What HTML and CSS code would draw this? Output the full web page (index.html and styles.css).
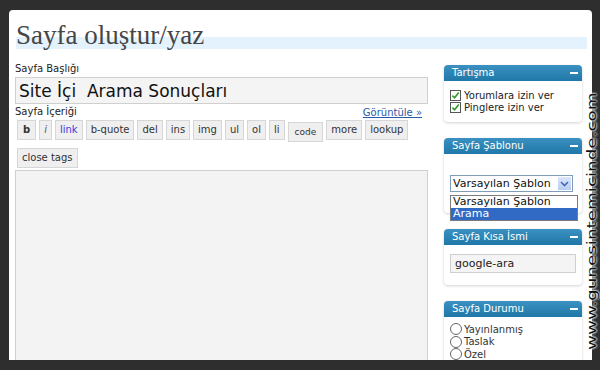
FILE: index.html
```html
<!DOCTYPE html>
<html>
<head>
    <title>Sayfa oluştur/yaz</title>
    <link rel="stylesheet" href="styles.css">
</head>
<body>
    <div class="wrap">
        <h2 class="page-title">Sayfa oluştur/yaz</h2>

        <div class="columns">
            <div class="main">
                <label class="field-label">Sayfa Başlığı</label>
                <div class="title-input">Site İçi&nbsp; Arama Sonuçları</div>

                <div class="content-head">
                    <label class="field-label">Sayfa İçeriği</label>
                    <a href="#" class="preview">Görüntüle »</a>
                </div>

                <div class="toolbar">
                    <button class="ed b">b</button>
                    <button class="ed i">i</button>
                    <button class="ed link">link</button>
                    <button class="ed">b-quote</button>
                    <button class="ed">del</button>
                    <button class="ed">ins</button>
                    <button class="ed">img</button>
                    <button class="ed">ul</button>
                    <button class="ed">ol</button>
                    <button class="ed">li</button>
                    <button class="ed code">code</button>
                    <button class="ed">more</button>
                    <button class="ed">lookup</button>
                    <button class="ed">close tags</button>
                </div>

                <div class="editor"></div>
            </div>

            <div class="sidebar">
                <div class="box">
                    <div class="box-head">Tartışma <i class="toggle"></i></div>
                    <div class="box-body">
                        <div class="check"><span class="cb"><svg width="9" height="9" viewBox="0 0 10 10"><path d="M1.5 5.2 4 7.6 8.6 1.8" fill="none" stroke="#2e9a2a" stroke-width="1.8"/></svg></span>Yorumlara izin ver</div>
                        <div class="check"><span class="cb"><svg width="9" height="9" viewBox="0 0 10 10"><path d="M1.5 5.2 4 7.6 8.6 1.8" fill="none" stroke="#2e9a2a" stroke-width="1.8"/></svg></span>Pinglere izin ver</div>
                    </div>
                </div>

                <div class="box template">
                    <div class="box-head">Sayfa Şablonu <i class="toggle"></i></div>
                    <div class="box-body">
                        <div class="select">
                            <span>Varsayılan Şablon</span>
                            <span class="arrow"><svg width="9" height="6" viewBox="0 0 9 6"><path d="M1 1 4.5 4.5 8 1" fill="none" stroke="#4a66b8" stroke-width="1.6"/></svg></span>
                        </div>
                        <ul class="options">
                            <li>Varsayılan Şablon</li>
                            <li class="on">Arama</li>
                        </ul>
                    </div>
                </div>

                <div class="box">
                    <div class="box-head">Sayfa Kısa İsmi <i class="toggle"></i></div>
                    <div class="box-body slug-body">
                        <div class="slug">google-ara</div>
                    </div>
                </div>

                <div class="box">
                    <div class="box-head">Sayfa Durumu <i class="toggle"></i></div>
                    <div class="box-body radios">
                        <div class="radio"><span class="rb"></span>Yayınlanmış</div>
                        <div class="radio"><span class="rb"></span>Taslak</div>
                        <div class="radio"><span class="rb"></span>Özel</div>
                    </div>
                </div>
            </div>
        </div>
    </div>
    <div class="watermark">www.gunesintemicinde.com</div>
</body>
</html>
```

FILE: styles.css
```css
body {
    margin: 0;
    padding: 10px 8px 0 9px;
    background-color: #2e2e2e;
    font-family: "DejaVu Sans", Verdana, sans-serif;
    font-size: 10px;
    color: #333;
    height: 370px;
    box-sizing: border-box;
    overflow: hidden;
}
.wrap {
    background-color: #fff;
    height: 350px;
    border-radius: 4px 4px 0 0;
    padding: 0 0 0 6px;
    overflow: hidden;
}
.page-title {
    margin: 0 5px 0 1px;
    padding-top: 5px;
    height: 35px;
    font-family: Georgia, "Liberation Serif", serif;
    font-weight: normal;
    font-size: 27px;
    line-height: 40px;
    color: #464646;
    background: linear-gradient(to bottom, transparent 27px, #e4f2fd 27px, #e4f2fd 39px, transparent 39px);
}
.columns {
    display: grid;
    grid-template-columns: 413px 138px;
    gap: 16px;
}
.main {
    display: flex;
    flex-direction: column;
}
.field-label {
    font-size: 10px;
    color: #222;
    line-height: 12px;
}
.main > .field-label {
    margin-top: 13px;
    margin-bottom: 2px;
}
.title-input {
    height: 25px;
    border: 1px solid #cfcfcf;
    background-color: #f4f4f4;
    font-size: 17px;
    line-height: 27px;
    color: #111;
    padding-left: 3px;
}
.content-head {
    display: flex;
    justify-content: space-between;
    align-items: flex-end;
    margin-top: 2px;
}
.preview {
    color: #2a5ba8;
    font-size: 10px;
    margin-right: 6px;
}
.toolbar {
    display: flex;
    flex-wrap: wrap;
    gap: 6px 3px;
    padding: 2px 0 0 2px;
}
.ed {
    font-family: "DejaVu Sans", Verdana, sans-serif;
    font-size: 10px;
    height: 20px;
    padding: 0 4px;
    border: 1px solid #d6d6d6;
    background-color: #efefef;
    color: #333;
    line-height: 18px;
}
.ed.b { font-weight: bold; padding: 0 5px; }
.ed.i { font-style: italic; color: #555; }
.ed.link { color: #3a3adb; }
.ed.code { margin-top: 2px; font-size: 9px; padding: 0 6px; }
.editor {
    margin-top: 2px;
    height: 200px;
    border: 1px solid #cfcfcf;
    background-color: #f3f3f3;
}
.sidebar {
    padding-top: 15px;
    display: flex;
    flex-direction: column;
    gap: 16px;
}
.box {
    background-color: #fff;
    border-radius: 4px;
    box-shadow: 0 1px 3px rgba(0, 0, 0, 0.18);
    position: relative;
}
.box-head {
    height: 16px;
    line-height: 16px;
    background: linear-gradient(to bottom, #3b91c1, #1f78a8);
    color: #fff;
    font-size: 10px;
    padding-left: 8px;
    border-radius: 4px 4px 0 0;
    position: relative;
}
.toggle {
    position: absolute;
    right: 4px;
    top: 7px;
    width: 8px;
    height: 2px;
    background-color: #fff;
}
.box-body {
    padding: 8px 6px 9px;
}
.check {
    display: flex;
    align-items: center;
    gap: 3px;
    height: 12px;
    font-size: 10px;
    color: #222;
}
.cb {
    width: 9px;
    height: 9px;
    border: 1px solid #555;
    background-color: #fff;
    display: flex;
}
.template .box-body {
    padding: 21px 5px 21px 6px;
}
.select {
    height: 15px;
    border: 1px solid #7f9db9;
    display: flex;
    justify-content: space-between;
    font-size: 11px;
    line-height: 15px;
    color: #111;
    padding-left: 2px;
    margin-right: 4px;
}
.arrow {
    width: 13px;
    height: 13px;
    margin: 1px;
    background: linear-gradient(to bottom, #dbe6fb, #b8cdf5);
    display: flex;
    align-items: center;
    justify-content: center;
}
.options {
    position: absolute;
    left: 6px;
    right: 4px;
    top: 57px;
    margin: 0;
    padding: 0;
    list-style: none;
    background-color: #fff;
    border: 1px solid #7a7a7a;
    font-size: 11px;
    line-height: 12px;
    z-index: 2;
}
.options li {
    padding-left: 2px;
    color: #111;
}
.options li.on {
    background-color: #316ac5;
    color: #fff;
}
.slug-body {
    padding: 9px 6px 12px;
}
.slug {
    height: 17px;
    border: 1px solid #cfcfcf;
    background-color: #f4f4f4;
    font-size: 11px;
    line-height: 17px;
    padding-left: 4px;
    color: #222;
}
.radios {
    padding-top: 6px;
}
.radio {
    display: flex;
    align-items: center;
    gap: 2px;
    height: 12.5px;
    font-size: 10px;
}
.rb {
    width: 10px;
    height: 10px;
    border: 1px solid #666;
    border-radius: 50%;
    background-color: #fff;
}
.watermark {
    position: absolute;
    left: 585px;
    top: 350px;
    transform-origin: 0 0;
    transform: rotate(-90deg) scaleX(1.41);
    font-family: "DejaVu Sans", Verdana, sans-serif;
    font-size: 13px;
    line-height: 13px;
    color: #111;
    text-shadow: 0 0 2px #fff, 0 0 2px #fff, 0 0 2px #fff;
    white-space: nowrap;
}
```
